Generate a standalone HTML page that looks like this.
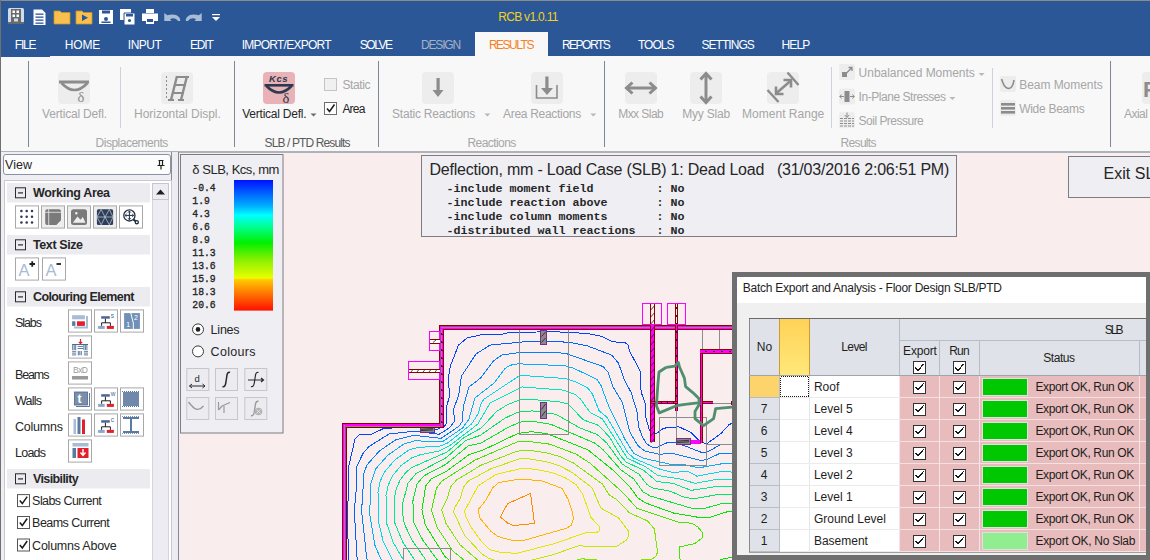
<!DOCTYPE html><html><head><meta charset="utf-8"><style>html,body{margin:0;padding:0;width:1150px;height:560px;overflow:hidden;background:#fff}svg{display:block}</style></head><body>
<svg width="1150" height="560" viewBox="0 0 1150 560" shape-rendering="crispEdges">
<rect x="0.00" y="0.00" width="1150.00" height="560.00" fill="#ffffff"/>
<rect x="179.00" y="152.00" width="971.00" height="408.00" fill="#f9eded"/>
<rect x="0.00" y="0.00" width="1150.00" height="57.00" fill="#2b5797"/>
<rect x="0.00" y="0.00" width="1150.00" height="1.00" fill="#8c8c8c"/>
<rect x="1.00" y="57.00" width="1149.00" height="94.00" fill="#f8f8f8"/>
<rect x="50.00" y="56.00" width="425.00" height="1.00" fill="#f8f8f8"/>
<rect x="548.00" y="56.00" width="602.00" height="1.00" fill="#f8f8f8"/>
<rect x="475.00" y="32.00" width="73.00" height="25.00" fill="#f8f8f8"/>
<rect x="1.00" y="151.00" width="1149.00" height="2.00" fill="#aeb2ba"/>
<rect x="0.00" y="0.00" width="1.00" height="560.00" fill="#707070"/>
<g shape-rendering="geometricPrecision">
<text x="498.2" y="21.0" font-size="12" fill="#f2d21c" font-weight="normal" font-family='"Liberation Sans", sans-serif' textLength="60.3" lengthAdjust="spacing">RCB v1.0.11</text>
<text x="14.8" y="49.0" font-size="12" fill="#ffffff" font-weight="normal" font-family='"Liberation Sans", sans-serif' textLength="21.7" lengthAdjust="spacing">FILE</text>
<text x="64.8" y="49.0" font-size="12" fill="#ffffff" font-weight="normal" font-family='"Liberation Sans", sans-serif' textLength="35.5" lengthAdjust="spacing">HOME</text>
<text x="127.8" y="49.0" font-size="12" fill="#ffffff" font-weight="normal" font-family='"Liberation Sans", sans-serif' textLength="34.1" lengthAdjust="spacing">INPUT</text>
<text x="189.9" y="49.0" font-size="12" fill="#ffffff" font-weight="normal" font-family='"Liberation Sans", sans-serif' textLength="23.9" lengthAdjust="spacing">EDIT</text>
<text x="241.7" y="49.0" font-size="12" fill="#ffffff" font-weight="normal" font-family='"Liberation Sans", sans-serif' textLength="89.8" lengthAdjust="spacing">IMPORT/EXPORT</text>
<text x="359.8" y="49.0" font-size="12" fill="#ffffff" font-weight="normal" font-family='"Liberation Sans", sans-serif' textLength="33.3" lengthAdjust="spacing">SOLVE</text>
<text x="421.1" y="49.0" font-size="12" fill="#a4b0c4" font-weight="normal" font-family='"Liberation Sans", sans-serif' textLength="40.0" lengthAdjust="spacing">DESIGN</text>
<text x="488.9" y="49.0" font-size="12" fill="#f5821f" font-weight="normal" font-family='"Liberation Sans", sans-serif' textLength="45.5" lengthAdjust="spacing">RESULTS</text>
<text x="561.9" y="49.0" font-size="12" fill="#ffffff" font-weight="normal" font-family='"Liberation Sans", sans-serif' textLength="48.9" lengthAdjust="spacing">REPORTS</text>
<text x="637.9" y="49.0" font-size="12" fill="#ffffff" font-weight="normal" font-family='"Liberation Sans", sans-serif' textLength="36.7" lengthAdjust="spacing">TOOLS</text>
<text x="701.5" y="49.0" font-size="12" fill="#ffffff" font-weight="normal" font-family='"Liberation Sans", sans-serif' textLength="53.3" lengthAdjust="spacing">SETTINGS</text>
<text x="781.6" y="49.0" font-size="12" fill="#ffffff" font-weight="normal" font-family='"Liberation Sans", sans-serif' textLength="28.6" lengthAdjust="spacing">HELP</text>
<rect x="8.00" y="8.00" width="16.00" height="16.00" fill="#cfdcec" rx="1.5"/>
<rect x="11.00" y="9.00" width="10.00" height="13.00" fill="#6a6a6a"/>
<rect x="12.50" y="10.50" width="2.50" height="2.50" fill="#ffffff"/>
<rect x="16.50" y="10.50" width="2.50" height="2.50" fill="#ffffff"/>
<rect x="12.50" y="14.50" width="2.50" height="2.50" fill="#ffffff"/>
<rect x="16.50" y="14.50" width="2.50" height="2.50" fill="#ffffff"/>
<rect x="14.00" y="18.50" width="4.00" height="3.00" fill="#cfdcec"/>
<rect x="8.00" y="22.00" width="16.00" height="2.00" fill="#6a6a6a"/>
<path d="M33.5 9.5 H42 L45.5 13 V25 H33.5 Z" fill="#ffffff"/>
<rect x="35.50" y="13.50" width="8.00" height="1.30" fill="#2b5797"/>
<rect x="35.50" y="16.50" width="8.00" height="1.30" fill="#2b5797"/>
<rect x="35.50" y="19.50" width="8.00" height="1.30" fill="#2b5797"/>
<rect x="35.50" y="22.50" width="8.00" height="1.30" fill="#2b5797"/>
<path d="M54 11 H60 L61.5 12.5 H70 V24 H54 Z" fill="#f9c04f" stroke="#c99220" stroke-width="0.8"/>
<path d="M76 11 H82 L83.5 12.5 H92 V24 H76 Z" fill="#f9c04f" stroke="#c99220" stroke-width="0.8"/>
<path d="M82 14.5 L88 17.8 L82 21 Z" fill="#2b5797"/>
<path d="M99 10 H113 V24 H99 Z" fill="#ffffff"/>
<rect x="102.00" y="10.50" width="8.00" height="3.00" fill="#2b5797"/>
<path d="M106 19 m-2 0 a2 2 0 1 0 4 0 a2 2 0 1 0 -4 0" fill="#2b5797"/>
<rect x="101.50" y="21.50" width="9.00" height="1.50" fill="#2b5797"/>
<path d="M120 9 H131 V20 H120 Z" fill="#ffffff"/>
<path d="M124 13 H135 V25 H124 Z" fill="#ffffff" stroke="#2b5797" stroke-width="1"/>
<rect x="126.00" y="14.00" width="7.00" height="2.50" fill="#2b5797"/>
<path d="M129.5 20.5 m-1.6 0 a1.6 1.6 0 1 0 3.2 0 a1.6 1.6 0 1 0 -3.2 0" fill="#2b5797"/>
<rect x="146.00" y="9.00" width="8.00" height="4.00" fill="#ffffff"/>
<path d="M142 13.5 H158 V21 H154 V24 H146 V21 H142 Z" fill="#ffffff"/>
<rect x="147.00" y="19.00" width="6.00" height="3.00" fill="#2b5797"/>
<path d="M164.3 13 L167.2 15.2 Q175.5 13.2 179 17 Q180.5 19 180.2 21 L178 21 Q176.5 18.3 173.5 18.3 Q171 18.3 170 19.6 L171.6 21 L164.3 21 Z" fill="#a9bcd6"/>
<path d="M201.7 13 L198.8 15.2 Q190.5 13.2 187 17 Q185.5 19 185.8 21 L188 21 Q189.5 18.3 192.5 18.3 Q195 18.3 196 19.6 L194.4 21 L201.7 21 Z" fill="#a9bcd6"/>
<rect x="212.00" y="14.00" width="8.00" height="1.20" fill="#ffffff"/>
<path d="M212 17 H220 L216 21 Z" fill="#ffffff"/>
</g>
<g>
<rect x="28.00" y="61.00" width="1.00" height="86.00" fill="#7f8795"/>
<rect x="234.00" y="61.00" width="1.00" height="86.00" fill="#7f8795"/>
<rect x="378.00" y="61.00" width="1.00" height="86.00" fill="#7f8795"/>
<rect x="604.00" y="61.00" width="1.00" height="86.00" fill="#7f8795"/>
<rect x="1110.00" y="61.00" width="1.00" height="86.00" fill="#7f8795"/>
<rect x="120.00" y="67.00" width="1.00" height="61.00" fill="#cdd3dc"/>
<rect x="831.00" y="67.00" width="1.00" height="61.00" fill="#cdd3dc"/>
<rect x="992.00" y="68.00" width="1.00" height="60.00" fill="#cdd3dc"/>
</g>
<g shape-rendering="geometricPrecision">
<rect x="58.00" y="72.00" width="32.00" height="32.00" fill="#ededed" rx="4"/>
<rect x="161.00" y="72.00" width="32.00" height="32.00" fill="#ededed" rx="4"/>
<rect x="422.00" y="72.00" width="32.00" height="32.00" fill="#ededed" rx="4"/>
<rect x="531.00" y="72.00" width="32.00" height="32.00" fill="#ededed" rx="4"/>
<rect x="625.00" y="72.00" width="32.00" height="32.00" fill="#ededed" rx="4"/>
<rect x="690.00" y="72.00" width="32.00" height="32.00" fill="#ededed" rx="4"/>
<rect x="767.00" y="72.00" width="32.00" height="32.00" fill="#ededed" rx="4"/>
<rect x="1142.00" y="72.00" width="32.00" height="32.00" fill="#ededed" rx="4"/>
<rect x="59.00" y="80.50" width="30.00" height="3.00" fill="#8c8c8c"/>
<path d="M61.5 83 Q74.5 97 87.5 83" fill="none" stroke="#8c8c8c" stroke-width="2.6"/>
<text x="77.5" y="101.8" font-size="14.5" fill="#8c8c8c" font-weight="normal" font-family='"Liberation Serif", serif'>δ</text>
<path d="M171 100 L177 76 M181 100 L187 76" fill="none" stroke="#8c8c8c" stroke-width="2.4"/>
<path d="M176 77 H189 M174.5 85 H186 M172.5 93 H184 M168 100 H174 M178 100 H184" fill="none" stroke="#8c8c8c" stroke-width="2"/>
<path d="M166.5 76 V100" fill="none" stroke="#8c8c8c" stroke-width="1" stroke-dasharray="2 2"/>
<rect x="263.00" y="72.00" width="32.00" height="32.00" fill="#e8b2b6" rx="4"/>
<text x="269.0" y="81.5" font-size="9.5" fill="#2b3a4e" font-weight="bold" font-family='"Liberation Sans", sans-serif' textLength="18.5" lengthAdjust="spacing" font-style="italic">Kcs</text>
<rect x="264.50" y="84.00" width="29.00" height="2.60" fill="#2b3a4e"/>
<path d="M266.5 86 Q279 99 291.5 86" fill="none" stroke="#2b3a4e" stroke-width="2.6"/>
<text x="282.5" y="102.8" font-size="14.5" fill="#2b3a4e" font-weight="normal" font-family='"Liberation Serif", serif'>δ</text>
<rect x="436.50" y="78.00" width="3.20" height="13.00" fill="#8c8c8c"/>
<path d="M432.5 90 H443.5 L438 97 Z" fill="#8c8c8c"/>
<path d="M536.5 85 V98 H557 V85" fill="none" stroke="#8c8c8c" stroke-width="1.6"/>
<rect x="545.30" y="76.50" width="3.20" height="12.00" fill="#8c8c8c"/>
<path d="M541 88 H553 L547 95 Z" fill="#8c8c8c"/>
<path d="M628 88 H654" fill="none" stroke="#8c8c8c" stroke-width="3"/>
<path d="M632.5 82.5 L626.5 88 L632.5 93.5 M649.5 82.5 L655.5 88 L649.5 93.5" fill="none" stroke="#8c8c8c" stroke-width="3"/>
<path d="M706 75 V101" fill="none" stroke="#8c8c8c" stroke-width="3"/>
<path d="M700.5 79.5 L706 73.5 L711.5 79.5 M700.5 96.5 L706 102.5 L711.5 96.5" fill="none" stroke="#8c8c8c" stroke-width="3"/>
<path d="M776 93.5 L791 80.5" fill="none" stroke="#8c8c8c" stroke-width="2.6"/>
<path d="M776 86.5 V94 H783.5 M783.5 80 H791 V87.5" fill="none" stroke="#8c8c8c" stroke-width="2.6"/>
<path d="M767.5 90 L778.5 102 M787.5 72.5 L798.5 85" fill="none" stroke="#8c8c8c" stroke-width="2.4"/>
<text x="1143.0" y="97.0" font-size="22" fill="#8c8c8c" font-weight="bold" font-family='"Liberation Sans", sans-serif'>P</text>
<text x="42.1" y="118.0" font-size="12" fill="#a6a6a6" font-weight="normal" font-family='"Liberation Sans", sans-serif' textLength="64.9" lengthAdjust="spacing">Vertical Defl.</text>
<text x="134.1" y="118.0" font-size="12" fill="#a6a6a6" font-weight="normal" font-family='"Liberation Sans", sans-serif' textLength="86.7" lengthAdjust="spacing">Horizontal Displ.</text>
<text x="242.2" y="118.0" font-size="12" fill="#262626" font-weight="normal" font-family='"Liberation Sans", sans-serif' textLength="64.4" lengthAdjust="spacing">Vertical Defl.</text>
<text x="392.1" y="118.0" font-size="12" fill="#a6a6a6" font-weight="normal" font-family='"Liberation Sans", sans-serif' textLength="83.2" lengthAdjust="spacing">Static Reactions</text>
<text x="503.0" y="118.0" font-size="12" fill="#a6a6a6" font-weight="normal" font-family='"Liberation Sans", sans-serif' textLength="78.2" lengthAdjust="spacing">Area Reactions</text>
<text x="618.2" y="118.0" font-size="12" fill="#a6a6a6" font-weight="normal" font-family='"Liberation Sans", sans-serif' textLength="45.6" lengthAdjust="spacing">Mxx Slab</text>
<text x="682.3" y="118.0" font-size="12" fill="#a6a6a6" font-weight="normal" font-family='"Liberation Sans", sans-serif' textLength="47.8" lengthAdjust="spacing">Myy Slab</text>
<text x="742.1" y="118.0" font-size="12" fill="#a6a6a6" font-weight="normal" font-family='"Liberation Sans", sans-serif' textLength="82.2" lengthAdjust="spacing">Moment Range</text>
<text x="1124.1" y="118.0" font-size="12" fill="#a6a6a6" font-weight="normal" font-family='"Liberation Sans", sans-serif' textLength="23.7" lengthAdjust="spacing">Axial</text>
<path d="M310.5 113.5 H316.5 L313.5 116.5 Z" fill="#6a6a6a"/>
<path d="M484.4 113.5 H490.4 L487.4 116.5 Z" fill="#b8b8b8"/>
<path d="M590.3 113.5 H596.3 L593.3 116.5 Z" fill="#b8b8b8"/>
<path d="M978.6 73 H984.6 L981.6 76 Z" fill="#b8b8b8"/>
<path d="M949.4 97 H955.4 L952.4 100 Z" fill="#b8b8b8"/>
<text x="95.6" y="147.0" font-size="12" fill="#a6a6a6" font-weight="normal" font-family='"Liberation Sans", sans-serif' textLength="72.7" lengthAdjust="spacing">Displacements</text>
<text x="264.5" y="147.0" font-size="12" fill="#5a5a5a" font-weight="normal" font-family='"Liberation Sans", sans-serif' textLength="86.0" lengthAdjust="spacing">SLB / PTD Results</text>
<text x="467.4" y="147.0" font-size="12" fill="#a6a6a6" font-weight="normal" font-family='"Liberation Sans", sans-serif' textLength="48.9" lengthAdjust="spacing">Reactions</text>
<text x="840.6" y="147.0" font-size="12" fill="#a6a6a6" font-weight="normal" font-family='"Liberation Sans", sans-serif' textLength="35.9" lengthAdjust="spacing">Results</text>
<rect x="324.50" y="78.50" width="12.00" height="12.00" fill="#f0f0f0" stroke="#c4c4c4" stroke-width="1"/>
<text x="342.4" y="89.0" font-size="12" fill="#a6a6a6" font-weight="normal" font-family='"Liberation Sans", sans-serif' textLength="28.2" lengthAdjust="spacing">Static</text>
<rect x="324.50" y="102.50" width="12.00" height="12.00" fill="#ffffff" stroke="#6e6e6e" stroke-width="1"/>
<path d="M327 108.5 L329.5 111.5 L334.5 104.5" fill="none" stroke="#1a1a1a" stroke-width="1.5"/>
<text x="342.4" y="113.0" font-size="12" fill="#262626" font-weight="normal" font-family='"Liberation Sans", sans-serif' textLength="23.0" lengthAdjust="spacing">Area</text>
<rect x="839.00" y="64.00" width="16.00" height="16.00" fill="#ededed" rx="2"/>
<rect x="839.00" y="88.60" width="16.00" height="16.00" fill="#ededed" rx="2"/>
<rect x="839.00" y="112.30" width="16.00" height="16.00" fill="#ededed" rx="2"/>
<rect x="842.00" y="72.00" width="5.00" height="5.00" fill="#8c8c8c"/>
<path d="M845.5 74 L852 67.5 M848.5 67.5 H852 V71" fill="none" stroke="#8c8c8c" stroke-width="1.3"/>
<rect x="844.50" y="91.00" width="5.00" height="11.00" fill="#8c8c8c"/>
<path d="M839.8 96.5 H844 M850 96.5 H854.2 M841.5 94.5 L839.8 96.5 L841.5 98.5 M852.5 94.5 L854.2 96.5 L852.5 98.5" fill="none" stroke="#8c8c8c" stroke-width="1"/>
<path d="M847 112.5 V117 M844.8 115 L847 117.5 L849.2 115" fill="none" stroke="#8c8c8c" stroke-width="1"/>
<path d="M840 118.5 H854" fill="none" stroke="#8c8c8c" stroke-width="1" stroke-dasharray="3 1"/>
<path d="M840 121 H854" fill="none" stroke="#8c8c8c" stroke-width="1" stroke-dasharray="3 1"/>
<path d="M840 123.5 H854" fill="none" stroke="#8c8c8c" stroke-width="1" stroke-dasharray="3 1"/>
<path d="M840 126 H854" fill="none" stroke="#8c8c8c" stroke-width="1" stroke-dasharray="3 1"/>
<text x="858.6" y="76.7" font-size="12" fill="#a6a6a6" font-weight="normal" font-family='"Liberation Sans", sans-serif' textLength="116.2" lengthAdjust="spacing">Unbalanced Moments</text>
<text x="858.6" y="100.6" font-size="12" fill="#a6a6a6" font-weight="normal" font-family='"Liberation Sans", sans-serif' textLength="87.3" lengthAdjust="spacing">In-Plane Stresses</text>
<text x="858.6" y="124.7" font-size="12" fill="#a6a6a6" font-weight="normal" font-family='"Liberation Sans", sans-serif' textLength="65.2" lengthAdjust="spacing">Soil Pressure</text>
<rect x="1000.00" y="76.00" width="16.00" height="16.00" fill="#ededed" rx="2"/>
<path d="M1001.5 79 L1003 83 Q1005 88 1008.5 88.5 Q1013 88 1014 80" fill="none" stroke="#8c8c8c" stroke-width="1.6"/>
<rect x="1000.00" y="100.00" width="16.00" height="16.00" fill="#ededed" rx="2"/>
<rect x="1001.00" y="103.00" width="14.00" height="2.60" fill="#8c8c8c"/>
<rect x="1001.00" y="107.00" width="14.00" height="2.60" fill="#8c8c8c"/>
<rect x="1001.00" y="111.00" width="14.00" height="2.60" fill="#8c8c8c"/>
<text x="1019.2" y="89.0" font-size="12" fill="#a6a6a6" font-weight="normal" font-family='"Liberation Sans", sans-serif' textLength="83.5" lengthAdjust="spacing">Beam Moments</text>
<text x="1019.2" y="113.0" font-size="12" fill="#a6a6a6" font-weight="normal" font-family='"Liberation Sans", sans-serif' textLength="65.5" lengthAdjust="spacing">Wide Beams</text>
</g>
<rect x="1.00" y="152.00" width="170.00" height="408.00" fill="#eeeef3"/>
<rect x="5.00" y="181.00" width="166.00" height="379.00" fill="#ffffff"/>
<rect x="171.00" y="152.00" width="1.00" height="408.00" fill="#8c8c8c"/>
<rect x="172.00" y="152.00" width="6.50" height="408.00" fill="#ececf2"/>
<rect x="178.00" y="152.00" width="1.00" height="408.00" fill="#838896"/>
<g shape-rendering="geometricPrecision">
<rect x="3.50" y="154.50" width="167.00" height="20.00" fill="#fcfcfc" stroke="#8a93a6" stroke-width="1" rx="2.5"/>
<text x="5.0" y="169.0" font-size="12.5" fill="#262626" font-weight="normal" font-family='"Liberation Sans", sans-serif' textLength="27.0" lengthAdjust="spacing">View</text>
<path d="M158.5 160.5 H163.5 M159.5 160.5 V165.5 H162.5 V160.5 M157.5 165.5 H164.5 M161 165.5 V169.5" fill="none" stroke="#1e1e1e" stroke-width="1.2"/>
<rect x="4.50" y="180.50" width="167.00" height="390.00" fill="none" stroke="#c8c8d2" stroke-width="1"/>
<rect x="152.50" y="183.50" width="16.00" height="380.00" fill="#ececf2" stroke="#d4d4de" stroke-width="1"/>
<rect x="152.50" y="183.50" width="16.00" height="16.00" fill="#ececf2" stroke="#c6c6d2" stroke-width="1"/>
<path d="M156 194.5 H165 L160.5 189.5 Z" fill="#1e1e1e"/>
<rect x="7.00" y="183.00" width="143.00" height="19.50" fill="#ebebf0"/>
<rect x="15.50" y="187.80" width="10.00" height="10.00" fill="none" stroke="#2a2a2a" stroke-width="1"/>
<rect x="18.00" y="192.30" width="5.00" height="1.20" fill="#2a2a2a"/>
<text x="33.0" y="197.2" font-size="12.5" fill="#262626" font-weight="bold" font-family='"Liberation Sans", sans-serif' textLength="77.0" lengthAdjust="spacing">Working Area</text>
<rect x="7.00" y="235.00" width="143.00" height="19.50" fill="#ebebf0"/>
<rect x="15.50" y="239.80" width="10.00" height="10.00" fill="none" stroke="#2a2a2a" stroke-width="1"/>
<rect x="18.00" y="244.30" width="5.00" height="1.20" fill="#2a2a2a"/>
<text x="33.0" y="249.2" font-size="12.5" fill="#262626" font-weight="bold" font-family='"Liberation Sans", sans-serif' textLength="50.0" lengthAdjust="spacing">Text Size</text>
<rect x="7.00" y="287.00" width="143.00" height="19.50" fill="#ebebf0"/>
<rect x="15.50" y="291.80" width="10.00" height="10.00" fill="none" stroke="#2a2a2a" stroke-width="1"/>
<rect x="18.00" y="296.30" width="5.00" height="1.20" fill="#2a2a2a"/>
<text x="33.0" y="301.2" font-size="12.5" fill="#262626" font-weight="bold" font-family='"Liberation Sans", sans-serif' textLength="101.4" lengthAdjust="spacing">Colouring Element</text>
<rect x="7.00" y="469.00" width="143.00" height="19.50" fill="#ebebf0"/>
<rect x="15.50" y="473.80" width="10.00" height="10.00" fill="none" stroke="#2a2a2a" stroke-width="1"/>
<rect x="18.00" y="478.30" width="5.00" height="1.20" fill="#2a2a2a"/>
<text x="33.0" y="483.2" font-size="12.5" fill="#262626" font-weight="bold" font-family='"Liberation Sans", sans-serif' textLength="45.7" lengthAdjust="spacing">Visibility</text>
<rect x="15.50" y="205.90" width="23.00" height="22.20" fill="#ffffff" stroke="#a8a8a8" stroke-width="1"/>
<rect x="41.50" y="205.90" width="23.00" height="22.20" fill="#eeeeee" stroke="#a8a8a8" stroke-width="1"/>
<rect x="67.50" y="205.90" width="23.00" height="22.20" fill="#eeeeee" stroke="#a8a8a8" stroke-width="1"/>
<rect x="93.50" y="205.90" width="23.00" height="22.20" fill="#eeeeee" stroke="#a8a8a8" stroke-width="1"/>
<rect x="119.50" y="205.90" width="23.00" height="22.20" fill="#ffffff" stroke="#a8a8a8" stroke-width="1"/>
<path d="M21.4 211.0 h0.01" fill="none" stroke="#2b3a55" stroke-width="2.5" stroke-linecap="round"/>
<path d="M26.7 211.0 h0.01" fill="none" stroke="#2b3a55" stroke-width="2.5" stroke-linecap="round"/>
<path d="M32.0 211.0 h0.01" fill="none" stroke="#2b3a55" stroke-width="2.5" stroke-linecap="round"/>
<path d="M21.4 216.75 h0.01" fill="none" stroke="#2b3a55" stroke-width="2.5" stroke-linecap="round"/>
<path d="M26.7 216.75 h0.01" fill="none" stroke="#2b3a55" stroke-width="2.5" stroke-linecap="round"/>
<path d="M32.0 216.75 h0.01" fill="none" stroke="#2b3a55" stroke-width="2.5" stroke-linecap="round"/>
<path d="M21.4 222.5 h0.01" fill="none" stroke="#2b3a55" stroke-width="2.5" stroke-linecap="round"/>
<path d="M26.7 222.5 h0.01" fill="none" stroke="#2b3a55" stroke-width="2.5" stroke-linecap="round"/>
<path d="M32.0 222.5 h0.01" fill="none" stroke="#2b3a55" stroke-width="2.5" stroke-linecap="round"/>
<rect x="45.20" y="209.20" width="15.80" height="15.80" fill="#7a7a7a" rx="2"/>
<path d="M48.7 209 V225 M45 212.3 H61" fill="none" stroke="#eeeeee" stroke-width="0.8"/>
<path d="M56 225.2 L61.2 220 V225.2 Z" fill="#eeeeee"/>
<path d="M56.5 224.5 Q56.5 220.5 60.5 220.5" fill="none" stroke="#7a7a7a" stroke-width="0.9"/>
<rect x="71.00" y="209.20" width="16.00" height="15.80" fill="#7a7a7a" rx="2.5"/>
<path d="M72.8 222.8 L77.5 216.5 L80.5 219.8 L82.8 217 L85.5 222.8 Z" fill="#eeeeee"/>
<path d="M76.3 213.2 m-1.3 0 a1.3 1.3 0 1 0 2.6 0 a1.3 1.3 0 1 0 -2.6 0" fill="#eeeeee"/>
<rect x="96.90" y="209.20" width="16.20" height="15.80" fill="#2e3e58" rx="1.5"/>
<path d="M96.9 217 L101.2 209.5 L105 217 L109.3 209.5 L113.1 217 M96.9 217 L101.2 224.8 L105 217 L109.3 224.8 L113.1 217 M96.9 217 H113.1" fill="none" stroke="#c9d2e0" stroke-width="0.7"/>
<path d="M129.4 215.4 m-5.6 0 a5.6 5.6 0 1 0 11.2 0 a5.6 5.6 0 1 0 -11.2 0" fill="none" stroke="#1e2d44" stroke-width="1.3"/>
<path d="M129.4 211.3 V219.5 M125.3 215.4 H133.5" fill="none" stroke="#1e2d44" stroke-width="1"/>
<path d="M128 212.6 L129.4 211 L130.8 212.6 M128 218.2 L129.4 219.8 L130.8 218.2 M126.6 214 L125 215.4 L126.6 216.8 M132.2 214 L133.8 215.4 L132.2 216.8" fill="none" stroke="#1e2d44" stroke-width="0.9"/>
<path d="M133.5 219.5 L136.5 222" fill="none" stroke="#1e2d44" stroke-width="2.2"/>
<path d="M136.8 222.2 m-2.2 0 a2.2 2.2 0 1 0 4.4 0 a2.2 2.2 0 1 0 -4.4 0" fill="#1e2d44"/>
<path d="M136.8 222.2 m-0.9 0 a0.9 0.9 0 1 0 1.8 0 a0.9 0.9 0 1 0 -1.8 0" fill="#ffffff"/>
<rect x="15.50" y="257.90" width="23.00" height="22.20" fill="#ffffff" stroke="#a8a8a8" stroke-width="1"/>
<rect x="42.50" y="257.90" width="23.00" height="22.20" fill="#ffffff" stroke="#a8a8a8" stroke-width="1"/>
<text x="18.5" y="276.0" font-size="16.5" fill="#a7bcd4" font-weight="normal" font-family='"Liberation Sans", sans-serif'>A</text>
<path d="M29.5 264 H35 M32.25 261.3 V266.7" fill="none" stroke="#1e1e1e" stroke-width="1.8"/>
<text x="45.5" y="276.0" font-size="16.5" fill="#a7bcd4" font-weight="normal" font-family='"Liberation Sans", sans-serif'>A</text>
<path d="M56.5 264 H61" fill="none" stroke="#1e1e1e" stroke-width="1.8"/>
<text x="15.0" y="326.5" font-size="12.5" fill="#262626" font-weight="normal" font-family='"Liberation Sans", sans-serif' textLength="27.0" lengthAdjust="spacing">Slabs</text>
<text x="15.0" y="378.5" font-size="12.5" fill="#262626" font-weight="normal" font-family='"Liberation Sans", sans-serif' textLength="34.4" lengthAdjust="spacing">Beams</text>
<text x="15.0" y="404.5" font-size="12.5" fill="#262626" font-weight="normal" font-family='"Liberation Sans", sans-serif' textLength="27.0" lengthAdjust="spacing">Walls</text>
<text x="15.0" y="430.5" font-size="12.5" fill="#262626" font-weight="normal" font-family='"Liberation Sans", sans-serif' textLength="48.0" lengthAdjust="spacing">Columns</text>
<text x="15.0" y="456.5" font-size="12.5" fill="#262626" font-weight="normal" font-family='"Liberation Sans", sans-serif' textLength="31.0" lengthAdjust="spacing">Loads</text>
<rect x="68.50" y="309.90" width="23.00" height="22.20" fill="#ffffff" stroke="#a8a8a8" stroke-width="1"/>
<rect x="94.50" y="309.90" width="23.00" height="22.20" fill="#ffffff" stroke="#a8a8a8" stroke-width="1"/>
<rect x="120.50" y="309.90" width="23.00" height="22.20" fill="#ffffff" stroke="#a8a8a8" stroke-width="1"/>
<rect x="68.50" y="335.90" width="23.00" height="22.20" fill="#ffffff" stroke="#a8a8a8" stroke-width="1"/>
<rect x="68.50" y="361.90" width="23.00" height="22.20" fill="#ffffff" stroke="#a8a8a8" stroke-width="1"/>
<rect x="68.50" y="387.90" width="23.00" height="22.20" fill="#ffffff" stroke="#a8a8a8" stroke-width="1"/>
<rect x="94.50" y="387.90" width="23.00" height="22.20" fill="#ffffff" stroke="#a8a8a8" stroke-width="1"/>
<rect x="120.50" y="387.90" width="23.00" height="22.20" fill="#ffffff" stroke="#a8a8a8" stroke-width="1"/>
<rect x="68.50" y="413.90" width="23.00" height="22.20" fill="#ffffff" stroke="#a8a8a8" stroke-width="1"/>
<rect x="94.50" y="413.90" width="23.00" height="22.20" fill="#ffffff" stroke="#a8a8a8" stroke-width="1"/>
<rect x="120.50" y="413.90" width="23.00" height="22.20" fill="#ffffff" stroke="#a8a8a8" stroke-width="1"/>
<rect x="68.50" y="439.90" width="23.00" height="22.20" fill="#ffffff" stroke="#a8a8a8" stroke-width="1"/>
<path d="M74 327.5 H87 V316" fill="none" stroke="#a8bcd6" stroke-width="2"/>
<rect x="72.10" y="315.20" width="12.80" height="4.10" fill="#a8bcd6"/>
<rect x="72.10" y="321.30" width="3.30" height="4.60" fill="#5a7aa4"/>
<rect x="77.00" y="321.30" width="7.90" height="4.60" fill="#e0202a"/>
<rect x="101.20" y="316.20" width="8.60" height="2.50" fill="#4a6a94"/>
<path d="M105.4 318.7 V322.79999999999995 M101.6 322.79999999999995 H110.4 M101.6 322.79999999999995 V325.9 M110.4 322.79999999999995 V325.9" fill="none" stroke="#1e1e1e" stroke-width="1"/>
<rect x="98.10" y="325.90" width="6.60" height="3.00" fill="#8aa8cc"/>
<rect x="106.80" y="325.90" width="7.10" height="3.00" fill="#e0202a"/>
<text x="110.8" y="317.7" font-size="6.5" fill="#4a6a94" font-weight="normal" font-family='"Liberation Sans", sans-serif'>s</text>
<rect x="101.20" y="394.20" width="8.60" height="2.50" fill="#4a6a94"/>
<path d="M105.4 396.7 V400.79999999999995 M101.6 400.79999999999995 H110.4 M101.6 400.79999999999995 V403.9 M110.4 400.79999999999995 V403.9" fill="none" stroke="#1e1e1e" stroke-width="1"/>
<rect x="98.10" y="403.90" width="6.60" height="3.00" fill="#8aa8cc"/>
<rect x="106.80" y="403.90" width="7.10" height="3.00" fill="#e0202a"/>
<text x="110.8" y="395.7" font-size="6.5" fill="#4a6a94" font-weight="normal" font-family='"Liberation Sans", sans-serif'>w</text>
<rect x="101.20" y="420.20" width="8.60" height="2.50" fill="#4a6a94"/>
<path d="M105.4 422.7 V426.79999999999995 M101.6 426.79999999999995 H110.4 M101.6 426.79999999999995 V429.9 M110.4 426.79999999999995 V429.9" fill="none" stroke="#1e1e1e" stroke-width="1"/>
<rect x="98.10" y="429.90" width="6.60" height="3.00" fill="#8aa8cc"/>
<rect x="106.80" y="429.90" width="7.10" height="3.00" fill="#e0202a"/>
<text x="110.8" y="421.7" font-size="6.5" fill="#4a6a94" font-weight="normal" font-family='"Liberation Sans", sans-serif'>c</text>
<rect x="124.10" y="313.10" width="15.80" height="15.80" fill="#7090b8"/>
<path d="M130.8 313 L133.3 323 V329" fill="none" stroke="#ffffff" stroke-width="1"/>
<text x="126.2" y="327.0" font-size="7" fill="#ffffff" font-weight="normal" font-family='"Liberation Sans", sans-serif'>1</text>
<text x="134.0" y="319.8" font-size="7" fill="#ffffff" font-weight="normal" font-family='"Liberation Sans", sans-serif'>2</text>
<path d="M80.5 339 V343.5 M78.8 341.8 L80.5 343.7 L82.2 341.8" fill="none" stroke="#e0202a" stroke-width="1.1"/>
<path d="M72.1 344.5 H88" fill="none" stroke="#4a6a94" stroke-width="1"/>
<path d="M72.7 345 V350 M74.2 345 V350 M75.7 345 V350 M83.9 345 V350 M85.4 345 V350 M86.9 345 V350" fill="none" stroke="#4a6a94" stroke-width="0.9"/>
<path d="M77.7 346.4 H83.3 M77.7 348.5 H83.3" fill="none" stroke="#4a6a94" stroke-width="0.9"/>
<path d="M72.1 351.3 H76.2 M72.1 353.1 H76.2 M72.1 354.9 H76.2 M83.9 351.3 H88 M83.9 353.1 H88 M83.9 354.9 H88" fill="none" stroke="#4a6a94" stroke-width="0.9"/>
<path d="M78.3 351 V355.3 M79.8 351 V355.3 M81.3 351 V355.3" fill="none" stroke="#4a6a94" stroke-width="0.9"/>
<text x="73.0" y="373.0" font-size="8.5" fill="#9a9a9a" font-weight="normal" font-family='"Liberation Sans", sans-serif' textLength="15.0" lengthAdjust="spacing">BxD</text>
<rect x="72.00" y="376.00" width="16.00" height="3.50" fill="#9a9a9a"/>
<rect x="74.50" y="392.00" width="13.00" height="13.00" fill="#7c8faa" stroke="#50648a" stroke-width="0.8"/>
<path d="M76 406.5 H89.5 V393" fill="none" stroke="#5a7aa4" stroke-width="1"/>
<text x="77.5" y="403.0" font-size="12" fill="#ffffff" font-weight="bold" font-family='"Liberation Sans", sans-serif'>t</text>
<rect x="123.00" y="392.00" width="16.00" height="14.00" fill="#7088aa"/>
<path d="M122 391.5 H140 M122 406.5 H140" fill="none" stroke="#5a7aa4" stroke-width="1" stroke-dasharray="1 1"/>
<rect x="73.50" y="419.00" width="2.50" height="15.00" fill="#a8bcd6"/>
<rect x="77.50" y="417.00" width="3.00" height="17.00" fill="#5a7aa4"/>
<rect x="82.00" y="419.50" width="3.00" height="14.50" fill="#e0202a"/>
<path d="M123 418 H139 M131 418 V432 M123 432 H139" fill="none" stroke="#5a7aa4" stroke-width="2"/>
<path d="M122 416.5 H140 M122 433.5 H140" fill="none" stroke="#5a7aa4" stroke-width="0.8" stroke-dasharray="1 1"/>
<rect x="72.50" y="443.00" width="16.00" height="3.50" fill="#a8bcd6"/>
<rect x="72.50" y="448.00" width="3.50" height="10.00" fill="#5a7aa4"/>
<rect x="77.50" y="448.00" width="11.00" height="10.00" fill="#e0202a"/>
<path d="M83 449 V455 M80.5 452.5 L83 455.5 L85.5 452.5" fill="none" stroke="#ffffff" stroke-width="1.4"/>
<rect x="17.50" y="494.60" width="12.00" height="12.00" fill="#ffffff" stroke="#555555" stroke-width="1"/>
<path d="M19.8 500.6 L22.3 503.6 L27.2 496.6" fill="none" stroke="#1a1a1a" stroke-width="1.5"/>
<text x="32.1" y="505.1" font-size="12.5" fill="#262626" font-weight="normal" font-family='"Liberation Sans", sans-serif' textLength="69.7" lengthAdjust="spacing">Slabs Current</text>
<rect x="17.50" y="516.50" width="12.00" height="12.00" fill="#ffffff" stroke="#555555" stroke-width="1"/>
<path d="M19.8 522.5 L22.3 525.5 L27.2 518.5" fill="none" stroke="#1a1a1a" stroke-width="1.5"/>
<text x="32.1" y="527.0" font-size="12.5" fill="#262626" font-weight="normal" font-family='"Liberation Sans", sans-serif' textLength="77.6" lengthAdjust="spacing">Beams Current</text>
<rect x="17.50" y="539.00" width="12.00" height="12.00" fill="#ffffff" stroke="#555555" stroke-width="1"/>
<path d="M19.8 545 L22.3 548 L27.2 541" fill="none" stroke="#1a1a1a" stroke-width="1.5"/>
<text x="32.1" y="549.5" font-size="12.5" fill="#262626" font-weight="normal" font-family='"Liberation Sans", sans-serif' textLength="84.7" lengthAdjust="spacing">Columns Above</text>
</g>
<defs><clipPath id="slab"><path d="M346.3 560 V426.6 H443.6 V330 H732 V560 Z"/></clipPath></defs>
<g clip-path="url(#slab)" shape-rendering="crispEdges">
<path d="M350.1 570.0 L348.5 560.0 L347.6 520.0 L348.8 466.0 L355.0 439.0 L359.1 435.0 L372.0 434.0 L384.0 428.3 L414.0 427.2 L437.0 429.3 L444.7 426.0 L447.0 422.0 L446.9 405.0 L449.8 396.0 L448.2 379.0 L450.4 366.0 L458.5 345.0 L467.1 338.0 L482.0 334.6 L502.0 334.2 L509.0 332.5 L554.0 331.7 L587.0 333.4 L602.0 336.4 L613.0 341.8 L625.0 342.6 L628.0 345.0 L630.0 352.0 L640.2 371.0 L641.1 392.0 L645.8 405.0 L646.0 418.1 L649.0 429.0 L652.0 433.1 L656.0 433.8 L662.0 429.2 L667.0 427.5 L679.0 426.9 L691.0 432.4 L701.0 442.3 L707.0 443.7 L721.5 433.0 L729.0 424.7 L740.0 419.5" fill="none" stroke="#0040ff" stroke-width="1"/>
<path d="M359.7 570.0 L357.0 557.0 L354.3 511.0 L356.7 485.0 L356.0 468.0 L363.0 453.5 L369.0 446.5 L389.0 434.0 L414.0 431.2 L439.0 434.3 L449.3 428.0 L454.8 421.0 L453.3 410.0 L458.7 395.0 L461.5 376.0 L476.1 354.0 L490.0 345.1 L527.0 341.5 L552.0 341.1 L571.0 342.6 L587.0 345.7 L612.0 355.3 L618.4 363.0 L624.4 380.0 L631.0 392.2 L636.9 411.0 L638.7 427.0 L642.4 437.0 L646.7 444.0 L651.9 447.0 L657.0 447.3 L667.0 442.8 L675.0 442.1 L703.0 453.0 L709.0 451.2 L721.0 444.2 L732.0 444.4 L740.0 442.5" fill="none" stroke="#0060ff" stroke-width="1"/>
<path d="M371.8 570.0 L366.7 558.0 L361.6 511.0 L364.0 473.0 L366.9 465.0 L379.3 451.0 L395.5 440.0 L414.0 435.3 L441.0 438.4 L459.3 426.0 L462.5 421.0 L463.2 407.0 L469.0 387.0 L480.6 378.0 L493.3 361.0 L502.0 355.0 L522.0 352.2 L565.0 353.1 L603.0 366.5 L607.9 372.0 L613.0 387.0 L622.2 402.0 L629.8 432.0 L638.0 445.7 L644.6 451.0 L659.0 454.2 L673.0 453.5 L701.0 460.4 L707.0 459.5 L720.7 453.0 L740.0 454.3" fill="none" stroke="#0080ff" stroke-width="1"/>
<path d="M385.6 570.0 L374.8 545.0 L369.7 514.0 L370.8 484.0 L375.6 469.0 L388.0 455.1 L404.0 444.0 L415.0 440.7 L442.0 442.0 L462.6 428.0 L469.0 419.0 L474.9 398.0 L494.2 383.0 L505.0 368.5 L510.0 365.3 L518.0 363.8 L565.0 365.7 L574.0 368.4 L597.0 379.4 L600.8 385.0 L609.0 407.0 L625.0 439.4 L634.0 453.7 L643.0 458.1 L673.0 464.9 L685.0 464.9 L699.0 467.8 L724.0 463.4 L740.0 463.6" fill="none" stroke="#00b0ff" stroke-width="1"/>
<path d="M397.2 570.0 L383.1 541.0 L378.5 522.0 L378.0 492.0 L380.3 481.0 L384.5 472.0 L395.0 459.8 L409.0 449.9 L419.0 447.2 L439.0 446.6 L448.0 442.8 L471.6 424.0 L478.0 414.0 L481.3 403.0 L484.0 399.1 L520.0 375.3 L565.0 378.5 L575.0 381.6 L587.7 388.0 L592.4 394.0 L599.2 411.0 L607.0 417.3 L627.9 453.0 L634.0 458.3 L658.0 468.6 L672.0 472.3 L688.0 471.6 L697.0 476.2 L721.0 471.6 L740.0 472.4" fill="none" stroke="#00d8f0" stroke-width="1"/>
<path d="M409.2 570.0 L393.0 542.0 L386.5 523.0 L386.0 495.2 L388.3 485.0 L392.4 476.0 L401.0 465.6 L411.6 458.0 L420.0 454.8 L439.0 451.1 L449.0 446.2 L477.9 424.0 L490.0 403.1 L522.0 386.9 L563.0 390.1 L575.0 394.3 L580.4 399.0 L590.0 412.3 L602.5 419.0 L627.2 458.0 L646.0 467.1 L658.0 475.6 L680.0 478.9 L695.0 483.3 L719.0 479.0 L740.0 480.3" fill="none" stroke="#00e8c0" stroke-width="1"/>
<path d="M421.5 570.0 L403.0 542.5 L394.4 522.0 L394.1 499.0 L396.2 489.0 L400.1 480.0 L405.3 473.0 L412.0 467.4 L447.0 452.0 L464.0 437.6 L481.2 428.0 L497.0 411.1 L508.0 404.4 L520.0 399.8 L528.0 399.1 L560.0 401.9 L568.0 404.1 L583.6 420.0 L597.0 424.7 L601.0 427.7 L610.0 437.8 L620.0 455.0 L626.0 462.0 L643.2 470.0 L657.0 481.6 L673.0 483.3 L691.0 490.4 L719.0 486.1 L740.0 487.5" fill="none" stroke="#00e890" stroke-width="1"/>
<path d="M432.9 570.0 L411.9 540.0 L404.4 524.0 L402.7 514.0 L403.0 502.0 L408.1 483.0 L416.0 473.7 L446.0 457.8 L466.0 440.3 L480.0 435.5 L505.0 418.1 L518.0 412.2 L532.0 410.9 L556.0 414.3 L580.1 428.0 L597.0 434.5 L606.8 443.0 L622.0 464.0 L639.0 474.2 L647.0 484.6 L653.0 488.2 L670.0 491.1 L683.0 496.7 L693.0 498.9 L721.0 494.0 L740.0 495.2" fill="none" stroke="#00e860" stroke-width="1"/>
<path d="M444.9 570.0 L423.3 541.0 L413.9 523.0 L412.9 501.0 L416.9 484.0 L423.7 476.0 L446.0 464.2 L468.0 446.0 L481.0 443.1 L509.0 426.9 L521.0 421.9 L535.0 421.6 L551.0 424.4 L595.0 443.2 L603.0 449.6 L621.0 470.0 L633.8 479.0 L643.0 491.9 L650.0 495.9 L693.0 508.7 L705.0 508.3 L723.0 503.2 L740.0 503.9" fill="none" stroke="#00e830" stroke-width="1"/>
<path d="M460.1 570.0 L444.5 556.0 L425.3 525.0 L421.9 510.0 L425.7 486.0 L431.2 479.0 L447.0 470.9 L469.0 454.7 L483.0 450.1 L518.0 433.4 L532.0 431.7 L547.0 433.6 L588.0 449.9 L612.0 469.3 L629.2 486.0 L638.0 498.1 L645.7 503.0 L674.0 513.2 L700.0 517.6 L710.0 517.2 L730.0 510.9 L740.0 514.0" fill="none" stroke="#00e800" stroke-width="1"/>
<path d="M740.0 555.1 L720.0 559.8 L709.8 570.0" fill="none" stroke="#00e800" stroke-width="1"/>
<path d="M476.3 570.0 L452.8 551.0 L436.9 527.0 L431.5 510.0 L436.5 488.0 L442.0 481.0 L475.0 460.1 L517.0 442.0 L526.0 441.1 L550.0 444.2 L576.0 454.1 L590.0 463.1 L623.3 493.0 L637.0 508.4 L678.0 522.0 L692.0 523.3 L697.8 527.0 L702.8 533.0 L702.3 538.0 L695.0 543.5 L679.1 547.0 L680.1 560.0 L675.7 570.0" fill="none" stroke="#40e800" stroke-width="1"/>
<path d="M494.7 570.0 L480.0 562.0 L460.0 544.8 L446.0 523.4 L441.6 510.0 L447.1 499.0 L450.6 487.0 L456.5 480.0 L481.0 465.2 L517.0 451.2 L528.0 450.2 L547.0 452.9 L560.0 456.7 L573.4 463.0 L602.4 484.0 L609.0 494.7 L617.0 499.8 L629.6 513.0 L647.7 521.0 L654.4 529.0 L657.5 552.0 L656.0 556.4 L651.0 559.6 L611.0 561.2 L582.0 558.8 L538.3 570.0" fill="none" stroke="#80e800" stroke-width="1"/>
<path d="M520.0 563.1 L500.0 562.2 L489.0 558.4 L481.9 554.0 L464.3 535.0 L453.7 512.0 L454.5 508.0 L460.0 499.0 L463.6 487.0 L468.0 481.3 L491.0 468.7 L519.0 459.0 L527.0 458.5 L548.0 462.1 L560.0 466.0 L572.0 472.4 L592.3 488.0 L600.7 508.0 L618.7 518.0 L628.5 531.0 L628.7 536.0 L626.6 540.0 L616.0 546.7 L578.0 545.9 L554.0 554.4 L520.0 563.1" fill="none" stroke="#c0e800" stroke-width="1"/>
<path d="M518.0 553.1 L503.0 552.9 L490.0 549.7 L481.8 542.0 L471.7 528.0 L465.9 517.0 L464.6 511.0 L478.0 486.0 L496.0 474.4 L522.0 468.3 L535.0 469.2 L553.0 472.9 L565.0 477.7 L576.0 484.6 L582.6 494.0 L591.0 517.4 L599.7 527.0 L599.4 531.0 L597.0 532.3 L586.0 532.6 L555.0 543.4 L518.0 553.1" fill="none" stroke="#e0e800" stroke-width="1"/>
<path d="M525.0 540.1 L512.0 540.4 L498.0 536.5 L491.0 531.4 L479.9 518.0 L477.9 510.0 L486.0 500.0 L492.5 488.0 L499.0 482.4 L521.0 479.0 L542.4 481.0 L562.0 488.4 L568.0 499.2 L572.5 512.0 L573.4 519.0 L571.4 525.0 L567.0 528.1 L525.0 540.1" fill="none" stroke="#ffb400" stroke-width="1"/>
<path d="M530.5 493.5 L534.5 523.5 L513.5 525.5 L507.5 523 L500.5 517 L506.5 505.5 L508 503.5 Z" fill="none" stroke="#ff8c00" stroke-width="1"/>
</g>
<g fill="none" stroke="#8c8c8c" stroke-width="1">
<rect x="519.50" y="327.50" width="48.50" height="106.50" fill="none" stroke="#8c8c8c" stroke-width="1"/>
<rect x="659.50" y="417.50" width="47.00" height="48.00" fill="none" stroke="#8c8c8c" stroke-width="1"/>
<line x1="676.5" y1="404" x2="676.5" y2="442" stroke="#8c8c8c" stroke-width="1"/>
<line x1="706.7" y1="444.5" x2="732" y2="444.5" stroke="#8c8c8c" stroke-width="1"/>
<line x1="712.9" y1="403.5" x2="732" y2="403.5" stroke="#8c8c8c" stroke-width="1"/>
<line x1="702.5" y1="330" x2="702.5" y2="350" stroke="#8c8c8c" stroke-width="1"/>
<line x1="719.5" y1="330" x2="719.5" y2="350" stroke="#8c8c8c" stroke-width="1"/>
<rect x="403.50" y="548.50" width="47.00" height="20.00" fill="none" stroke="#8c8c8c" stroke-width="1"/>
</g>
<rect x="540.50" y="330.50" width="6.00" height="13.50" fill="#8a8a8a" stroke="#7a2a8a" stroke-width="1"/>
<path d="M541.5 342.5 L545.5 337.975 M541.5 336.525 L545.5 332" stroke="#222" stroke-width="0.8" fill="none" shape-rendering="geometricPrecision"/>
<rect x="540.50" y="402.50" width="6.00" height="15.50" fill="#8a8a8a" stroke="#7a2a8a" stroke-width="1"/>
<path d="M541.5 416.5 L545.5 411.075 M541.5 409.425 L545.5 404" stroke="#222" stroke-width="0.8" fill="none" shape-rendering="geometricPrecision"/>
<rect x="420.00" y="427.10" width="14.00" height="5.00" fill="#8a8a8a" stroke="#7a2a8a" stroke-width="1"/>
<path d="M421.0 430.6 L433.0 429.90000000000003 M421.0 429.3 L433.0 428.6" stroke="#222" stroke-width="0.8" fill="none" shape-rendering="geometricPrecision"/>
<rect x="690.00" y="440.40" width="10.50" height="3.80" fill="#ff00ff"/>
<rect x="676.00" y="438.80" width="14.00" height="5.30" fill="#8a8a8a" stroke="#7a2a8a" stroke-width="1"/>
<path d="M677.0 442.6 L689.0 441.765 M677.0 441.135 L689.0 440.3" stroke="#222" stroke-width="0.8" fill="none" shape-rendering="geometricPrecision"/>
<rect x="342.00" y="423.00" width="102.00" height="5.00" fill="#8b0000"/>
<rect x="343.00" y="424.00" width="100.00" height="3.00" fill="#ff00ff"/>
<rect x="343.00" y="425.00" width="100.00" height="1.00" fill="#8a8a8a"/>
<rect x="342.00" y="423.00" width="5.00" height="138.00" fill="#8b0000"/>
<rect x="343.00" y="424.00" width="3.00" height="136.00" fill="#ff00ff"/>
<rect x="344.00" y="424.00" width="1.00" height="136.00" fill="#8a8a8a"/>
<rect x="439.00" y="325.00" width="5.00" height="103.00" fill="#8b0000"/>
<rect x="440.00" y="326.00" width="3.00" height="101.00" fill="#ff00ff"/>
<rect x="441.00" y="326.00" width="1.00" height="101.00" fill="#8a8a8a"/>
<rect x="439.00" y="325.00" width="294.00" height="5.00" fill="#8b0000"/>
<rect x="440.00" y="326.00" width="292.00" height="3.00" fill="#ff00ff"/>
<rect x="440.00" y="327.00" width="292.00" height="1.00" fill="#8a8a8a"/>
<rect x="343.00" y="424.00" width="100.00" height="3.00" fill="#ff00ff"/>
<rect x="343.00" y="425.50" width="100.00" height="1.00" fill="#8a8a8a"/>
<rect x="440.00" y="326.00" width="3.00" height="101.00" fill="#ff00ff"/>
<rect x="441.00" y="327.00" width="1.00" height="99.00" fill="#8a8a8a"/>
<rect x="343.00" y="424.00" width="3.00" height="136.00" fill="#ff00ff"/>
<rect x="344.00" y="425.00" width="1.00" height="135.00" fill="#8a8a8a"/>
<rect x="440.00" y="326.00" width="292.00" height="3.00" fill="#ff00ff"/>
<rect x="441.00" y="327.00" width="291.00" height="1.00" fill="#8a8a8a"/>
<path d="M441 333 L442.5 335" fill="none" stroke="#222" stroke-width="1"/>
<path d="M441 341 L442.5 343" fill="none" stroke="#222" stroke-width="1"/>
<path d="M441 349 L442.5 351" fill="none" stroke="#222" stroke-width="1"/>
<path d="M441 357 L442.5 359" fill="none" stroke="#222" stroke-width="1"/>
<path d="M441 365 L442.5 367" fill="none" stroke="#222" stroke-width="1"/>
<path d="M441 373 L442.5 375" fill="none" stroke="#222" stroke-width="1"/>
<path d="M441 381 L442.5 383" fill="none" stroke="#222" stroke-width="1"/>
<path d="M441 389 L442.5 391" fill="none" stroke="#222" stroke-width="1"/>
<path d="M441 397 L442.5 399" fill="none" stroke="#222" stroke-width="1"/>
<path d="M441 405 L442.5 407" fill="none" stroke="#222" stroke-width="1"/>
<path d="M441 413 L442.5 415" fill="none" stroke="#222" stroke-width="1"/>
<path d="M441 421 L442.5 423" fill="none" stroke="#222" stroke-width="1"/>
<rect x="650.00" y="325.00" width="5.00" height="117.00" fill="#ff00ff"/>
<path d="M650.5 325 V442 M654.5 325 V442" fill="none" stroke="#8b0000" stroke-width="1"/>
<rect x="650.00" y="303.00" width="5.00" height="22.00" fill="#f9eded"/>
<path d="M650.5 303 V325 M654.5 303 V325" fill="none" stroke="#8b0000" stroke-width="1"/>
<g shape-rendering="geometricPrecision">
<path d="M650.8 310 L654.2 306" fill="none" stroke="#222" stroke-width="0.8"/>
<path d="M650.8 317 L654.2 313" fill="none" stroke="#222" stroke-width="0.8"/>
<path d="M650.8 324 L654.2 320" fill="none" stroke="#222" stroke-width="0.8"/>
<path d="M650.8 331 L654.2 327" fill="none" stroke="#222" stroke-width="0.8"/>
<path d="M650.8 338 L654.2 334" fill="none" stroke="#222" stroke-width="0.8"/>
<path d="M650.8 345 L654.2 341" fill="none" stroke="#222" stroke-width="0.8"/>
<path d="M650.8 352 L654.2 348" fill="none" stroke="#222" stroke-width="0.8"/>
<path d="M650.8 359 L654.2 355" fill="none" stroke="#222" stroke-width="0.8"/>
<path d="M650.8 366 L654.2 362" fill="none" stroke="#222" stroke-width="0.8"/>
<path d="M650.8 373 L654.2 369" fill="none" stroke="#222" stroke-width="0.8"/>
<path d="M650.8 380 L654.2 376" fill="none" stroke="#222" stroke-width="0.8"/>
<path d="M650.8 387 L654.2 383" fill="none" stroke="#222" stroke-width="0.8"/>
<path d="M650.8 394 L654.2 390" fill="none" stroke="#222" stroke-width="0.8"/>
<path d="M650.8 401 L654.2 397" fill="none" stroke="#222" stroke-width="0.8"/>
<path d="M650.8 408 L654.2 404" fill="none" stroke="#222" stroke-width="0.8"/>
<path d="M650.8 415 L654.2 411" fill="none" stroke="#222" stroke-width="0.8"/>
<path d="M650.8 422 L654.2 418" fill="none" stroke="#222" stroke-width="0.8"/>
<path d="M650.8 429 L654.2 425" fill="none" stroke="#222" stroke-width="0.8"/>
<path d="M650.8 436 L654.2 432" fill="none" stroke="#222" stroke-width="0.8"/>
<path d="M650.8 443 L654.2 439" fill="none" stroke="#222" stroke-width="0.8"/>
</g>
<rect x="675.00" y="325.00" width="3.00" height="86.40" fill="#ff00ff"/>
<path d="M675.5 325 V411.4 M677.5 325 V411.4" fill="none" stroke="#8b0000" stroke-width="1"/>
<rect x="675.00" y="303.00" width="3.00" height="22.00" fill="#f9eded"/>
<path d="M675.5 303 V325 M677.5 303 V325" fill="none" stroke="#8b0000" stroke-width="1"/>
<rect x="676.00" y="307.00" width="1.00" height="1.50" fill="#222"/>
<rect x="676.00" y="315.00" width="1.00" height="1.50" fill="#222"/>
<rect x="676.00" y="323.00" width="1.00" height="1.50" fill="#222"/>
<rect x="676.00" y="331.00" width="1.00" height="1.50" fill="#222"/>
<rect x="676.00" y="339.00" width="1.00" height="1.50" fill="#222"/>
<rect x="676.00" y="347.00" width="1.00" height="1.50" fill="#222"/>
<rect x="676.00" y="355.00" width="1.00" height="1.50" fill="#222"/>
<rect x="676.00" y="363.00" width="1.00" height="1.50" fill="#222"/>
<rect x="676.00" y="371.00" width="1.00" height="1.50" fill="#222"/>
<rect x="676.00" y="379.00" width="1.00" height="1.50" fill="#222"/>
<rect x="676.00" y="387.00" width="1.00" height="1.50" fill="#222"/>
<rect x="676.00" y="395.00" width="1.00" height="1.50" fill="#222"/>
<rect x="676.00" y="403.00" width="1.00" height="1.50" fill="#222"/>
<rect x="699.50" y="349.30" width="3.50" height="93.70" fill="#ff00ff"/>
<path d="M700.0 349.3 V443 M702.5 349.3 V443" fill="none" stroke="#8b0000" stroke-width="1"/>
<rect x="699.50" y="349.30" width="32.50" height="4.30" fill="#ff00ff"/>
<path d="M699.5 349.8 H732 M699.5 353.1 H732" fill="none" stroke="#8b0000" stroke-width="1"/>
<rect x="705.00" y="351.00" width="1.50" height="1.00" fill="#222"/>
<rect x="713.00" y="351.00" width="1.50" height="1.00" fill="#222"/>
<rect x="721.00" y="351.00" width="1.50" height="1.00" fill="#222"/>
<rect x="729.00" y="351.00" width="1.50" height="1.00" fill="#222"/>
<rect x="651.00" y="401.10" width="26.10" height="3.20" fill="#ff00ff"/>
<path d="M651 401.6 H677.1 M651 403.8 H677.1" fill="none" stroke="#8b0000" stroke-width="1"/>
<rect x="655.00" y="402.00" width="1.00" height="1.20" fill="#222"/>
<rect x="661.00" y="402.00" width="1.00" height="1.20" fill="#222"/>
<rect x="667.00" y="402.00" width="1.00" height="1.20" fill="#222"/>
<rect x="673.00" y="402.00" width="1.00" height="1.20" fill="#222"/>
<rect x="703.00" y="401.10" width="9.90" height="3.20" fill="#ff00ff"/>
<path d="M703 401.6 H712.9 M703 403.8 H712.9" fill="none" stroke="#8b0000" stroke-width="1"/>
<rect x="731.00" y="401.00" width="1.00" height="4.00" fill="#8b0000"/>
<rect x="429.80" y="331.60" width="9.70" height="18.60" fill="none" stroke="#ff00ff" stroke-width="1"/>
<rect x="408.80" y="361.60" width="30.70" height="18.20" fill="none" stroke="#ff00ff" stroke-width="1"/>
<rect x="642.60" y="303.60" width="18.80" height="21.30" fill="none" stroke="#ff00ff" stroke-width="1"/>
<rect x="667.60" y="303.60" width="17.60" height="21.30" fill="none" stroke="#ff00ff" stroke-width="1"/>
<rect x="430.00" y="339.30" width="10.00" height="4.30" fill="#ffffff"/>
<path d="M430 339.8 H440 M430 343.1 H440" fill="none" stroke="#8b0000" stroke-width="1"/>
<rect x="408.50" y="368.90" width="31.00" height="3.70" fill="#ffffff"/>
<path d="M408.5 369.4 H440 M408.5 372.1 H440" fill="none" stroke="#8b0000" stroke-width="1"/>
<g shape-rendering="geometricPrecision">
<path d="M411 372 L413 369.5" fill="none" stroke="#222" stroke-width="0.8"/>
<path d="M417 372 L419 369.5" fill="none" stroke="#222" stroke-width="0.8"/>
<path d="M423 372 L425 369.5" fill="none" stroke="#222" stroke-width="0.8"/>
<path d="M429 372 L431 369.5" fill="none" stroke="#222" stroke-width="0.8"/>
<path d="M435 372 L437 369.5" fill="none" stroke="#222" stroke-width="0.8"/>
<path d="M433 342.5 L436 340" fill="none" stroke="#222" stroke-width="0.8"/>
<path d="M666.3 367.3 L659 372 L657.9 384.3 L656.4 405.7 L659.3 412.9 L676.4 405.7 L685 404.3 L697.9 402.9" fill="none" stroke="#4d8f6f" stroke-width="2.8" stroke-linejoin="round"/>
<path d="M666.3 367.3 L674.8 366.1 L678.4 362.5 L679.6 367.3 L684.4 378.1 L685.6 386.6 L692.8 392.6 L698.9 398.6 L699.3 404.3 L695 411.4 L695 418.6 L703.6 425.7 L713.6 418.6 L715.7 408.6 L732 407.1" fill="none" stroke="#4d8f6f" stroke-width="2.8" stroke-linejoin="round"/>
</g>
<g shape-rendering="geometricPrecision">
<rect x="180.50" y="154.50" width="102.50" height="278.50" fill="#eeeef3" stroke="#7c7c82" stroke-width="1"/>
<text x="192.3" y="174.4" font-size="13" fill="#262626" font-weight="normal" font-family='"Liberation Sans", sans-serif' textLength="87.1" lengthAdjust="spacing">δ SLB, Kcs, mm</text>
<defs><linearGradient id="lg" x1="0" y1="0" x2="0" y2="1"><stop offset="0" stop-color="#0010ff"/><stop offset="0.2" stop-color="#00b0ff"/><stop offset="0.27" stop-color="#00ffff"/><stop offset="0.36" stop-color="#00ff90"/><stop offset="0.48" stop-color="#00f000"/><stop offset="0.62" stop-color="#90f000"/><stop offset="0.75" stop-color="#e8ff00"/><stop offset="0.765" stop-color="#ffc800"/><stop offset="1" stop-color="#ff1000"/></linearGradient></defs>
<rect x="234.00" y="180.00" width="39.00" height="130.60" fill="url(#lg)"/>
<text x="192.3" y="191.3" font-size="11" fill="#262626" font-weight="normal" font-family='"Liberation Mono", monospace' textLength="23.4" lengthAdjust="spacingAndGlyphs" stroke="#262626" stroke-width="0.35">-0.4</text>
<text x="192.3" y="204.3" font-size="11" fill="#262626" font-weight="normal" font-family='"Liberation Mono", monospace' textLength="17.5" lengthAdjust="spacingAndGlyphs" stroke="#262626" stroke-width="0.35">1.9</text>
<text x="192.3" y="217.3" font-size="11" fill="#262626" font-weight="normal" font-family='"Liberation Mono", monospace' textLength="17.5" lengthAdjust="spacingAndGlyphs" stroke="#262626" stroke-width="0.35">4.3</text>
<text x="192.3" y="230.3" font-size="11" fill="#262626" font-weight="normal" font-family='"Liberation Mono", monospace' textLength="17.5" lengthAdjust="spacingAndGlyphs" stroke="#262626" stroke-width="0.35">6.6</text>
<text x="192.3" y="243.3" font-size="11" fill="#262626" font-weight="normal" font-family='"Liberation Mono", monospace' textLength="17.5" lengthAdjust="spacingAndGlyphs" stroke="#262626" stroke-width="0.35">8.9</text>
<text x="192.3" y="256.3" font-size="11" fill="#262626" font-weight="normal" font-family='"Liberation Mono", monospace' textLength="23.4" lengthAdjust="spacingAndGlyphs" stroke="#262626" stroke-width="0.35">11.3</text>
<text x="192.3" y="269.3" font-size="11" fill="#262626" font-weight="normal" font-family='"Liberation Mono", monospace' textLength="23.4" lengthAdjust="spacingAndGlyphs" stroke="#262626" stroke-width="0.35">13.6</text>
<text x="192.3" y="282.3" font-size="11" fill="#262626" font-weight="normal" font-family='"Liberation Mono", monospace' textLength="23.4" lengthAdjust="spacingAndGlyphs" stroke="#262626" stroke-width="0.35">15.9</text>
<text x="192.3" y="295.3" font-size="11" fill="#262626" font-weight="normal" font-family='"Liberation Mono", monospace' textLength="23.4" lengthAdjust="spacingAndGlyphs" stroke="#262626" stroke-width="0.35">18.3</text>
<text x="192.3" y="308.3" font-size="11" fill="#262626" font-weight="normal" font-family='"Liberation Mono", monospace' textLength="23.4" lengthAdjust="spacingAndGlyphs" stroke="#262626" stroke-width="0.35">20.6</text>
<circle cx="198" cy="329.4" r="5.5" fill="#ffffff" stroke="#3a3a3a" stroke-width="1"/>
<text x="210.6" y="333.9" font-size="12.5" fill="#262626" font-weight="normal" font-family='"Liberation Sans", sans-serif' textLength="29.0" lengthAdjust="spacing">Lines</text>
<circle cx="198" cy="351.4" r="5.5" fill="#ffffff" stroke="#3a3a3a" stroke-width="1"/>
<text x="210.6" y="355.9" font-size="12.5" fill="#262626" font-weight="normal" font-family='"Liberation Sans", sans-serif' textLength="45.0" lengthAdjust="spacing">Colours</text>
<circle cx="198" cy="329.4" r="2.3" fill="#1e1e1e"/>
<rect x="186.80" y="368.50" width="22.00" height="22.00" fill="#ececf0" stroke="#c6c6cc" stroke-width="1"/>
<rect x="215.50" y="368.50" width="22.00" height="22.00" fill="#ececf0" stroke="#c6c6cc" stroke-width="1"/>
<rect x="244.80" y="368.50" width="22.00" height="22.00" fill="#ececf0" stroke="#c6c6cc" stroke-width="1"/>
<rect x="186.80" y="397.50" width="22.00" height="22.00" fill="#ececf0" stroke="#c6c6cc" stroke-width="1"/>
<rect x="215.50" y="397.50" width="22.00" height="22.00" fill="#ececf0" stroke="#c6c6cc" stroke-width="1"/>
<rect x="244.80" y="397.50" width="22.00" height="22.00" fill="#ececf0" stroke="#c6c6cc" stroke-width="1"/>
<text x="194.5" y="381.5" font-size="9.5" fill="#2a2a2a" font-weight="normal" font-family='"Liberation Sans", sans-serif'>d</text>
<path d="M189.5 386 H205 M192 384 L189.5 386 L192 388 M202.5 384 L205 386 L202.5 388" fill="none" stroke="#2a2a2a" stroke-width="1"/>
<path d="M222.5 386.5 Q225 387.5 225.8 383 L227 375 Q227.8 371.5 230 372.5" fill="none" stroke="#2a2a2a" stroke-width="1.5"/>
<path d="M251 386.5 Q253.5 387.5 254.3 383 L255.5 375 Q256.3 371.5 258.5 372.5 M248 380 H263.5 M261 378 L263.5 380 L261 382" fill="none" stroke="#2a2a2a" stroke-width="1.2"/>
<path d="M188.5 402 Q190 404 191.5 405.5 Q197.5 413 203.5 406" fill="none" stroke="#9a9a9a" stroke-width="1.3"/>
<path d="M218.5 402 V410 M218.5 410 L222 406 M222 406 L230 402.5 M224 406 V413" fill="none" stroke="#9a9a9a" stroke-width="1.2"/>
<path d="M251 415.5 Q253.5 416.5 254.3 412 L255.5 404 Q256.3 400.5 258.5 401.5" fill="none" stroke="#9a9a9a" stroke-width="1.4"/>
<circle cx="258.5" cy="411.5" r="3.8" fill="#b4b4b4"/>
<path d="M256.5 409.5 L260.5 413.5 M260.5 409.5 L256.5 413.5" fill="none" stroke="#e8e8e8" stroke-width="0.8"/>
<rect x="421.50" y="155.50" width="535.00" height="81.00" fill="#eeeef3" stroke="#7c7c82" stroke-width="1"/>
<text x="429.4" y="175.3" font-size="16" fill="#262626" font-weight="normal" font-family='"Liberation Sans", sans-serif' textLength="519.9" lengthAdjust="spacing" xml:space="preserve">Deflection, mm - Load Case (SLB) 1: Dead Load   (31/03/2016 2:06:51 PM)</text>
<text x="446.6" y="192.3" font-size="11.67" fill="#262626" font-weight="bold" font-family='"Liberation Mono", monospace' xml:space="preserve">-include moment field</text>
<text x="656.6" y="192.3" font-size="11.67" fill="#262626" font-weight="bold" font-family='"Liberation Mono", monospace' xml:space="preserve">: No</text>
<text x="446.6" y="206.3" font-size="11.67" fill="#262626" font-weight="bold" font-family='"Liberation Mono", monospace' xml:space="preserve">-include reaction above</text>
<text x="656.6" y="206.3" font-size="11.67" fill="#262626" font-weight="bold" font-family='"Liberation Mono", monospace' xml:space="preserve">: No</text>
<text x="446.6" y="220.3" font-size="11.67" fill="#262626" font-weight="bold" font-family='"Liberation Mono", monospace' xml:space="preserve">-include column moments</text>
<text x="656.6" y="220.3" font-size="11.67" fill="#262626" font-weight="bold" font-family='"Liberation Mono", monospace' xml:space="preserve">: No</text>
<text x="446.6" y="234.3" font-size="11.67" fill="#262626" font-weight="bold" font-family='"Liberation Mono", monospace' xml:space="preserve">-distributed wall reactions</text>
<text x="656.6" y="234.3" font-size="11.67" fill="#262626" font-weight="bold" font-family='"Liberation Mono", monospace' xml:space="preserve">: No</text>
<rect x="1068.50" y="156.50" width="100.00" height="41.00" fill="#eeeef3" stroke="#7c7c82" stroke-width="1"/>
<text x="1103.6" y="178.9" font-size="16" fill="#262626" font-weight="normal" font-family='"Liberation Sans", sans-serif'>Exit SLB</text>
</g>
<rect x="732.00" y="272.00" width="418.00" height="288.00" fill="#6f6f6f"/>
<rect x="737.00" y="277.00" width="409.00" height="278.00" fill="#f0f0f0"/>
<rect x="737.00" y="277.00" width="409.00" height="26.00" fill="#ffffff"/>
<g shape-rendering="geometricPrecision">
<text x="742.8" y="292.0" font-size="12" fill="#1e1e1e" font-weight="normal" font-family='"Liberation Sans", sans-serif' textLength="259.2" lengthAdjust="spacing">Batch Export and Analysis - Floor Design SLB/PTD</text>
</g>
<rect x="749.00" y="318.50" width="397.00" height="57.00" fill="#dfe2e8"/>
<defs><linearGradient id="yg" x1="0" y1="0" x2="0" y2="1"><stop offset="0" stop-color="#ffd257"/><stop offset="1" stop-color="#ffe87a"/></linearGradient></defs>
<rect x="779.50" y="318.50" width="30.00" height="57.00" fill="url(#yg)" stroke="#d09a30" stroke-width="1"/>
<line x1="749" y1="318.5" x2="1146" y2="318.5" stroke="#6a6a6a" stroke-width="1"/>
<line x1="749.5" y1="318.5" x2="749.5" y2="552" stroke="#8a8a8a" stroke-width="1"/>
<line x1="899.5" y1="318.5" x2="899.5" y2="375.5" stroke="#b8bcc4" stroke-width="1"/>
<line x1="939.5" y1="340.5" x2="939.5" y2="375.5" stroke="#b8bcc4" stroke-width="1"/>
<line x1="979.5" y1="340.5" x2="979.5" y2="375.5" stroke="#b8bcc4" stroke-width="1"/>
<line x1="1139.5" y1="340.5" x2="1139.5" y2="375.5" stroke="#b8bcc4" stroke-width="1"/>
<line x1="899.5" y1="340.5" x2="1146" y2="340.5" stroke="#b8bcc4" stroke-width="1"/>
<line x1="749" y1="375.5" x2="1146" y2="375.5" stroke="#a0a4ac" stroke-width="1"/>
<rect x="750.00" y="376.00" width="29.50" height="21.50" fill="#fdd36b"/>
<rect x="780.00" y="376.00" width="29.50" height="21.50" fill="#ffffff"/>
<rect x="810.00" y="376.00" width="89.50" height="21.50" fill="#ffffff"/>
<rect x="900.00" y="376.00" width="246.00" height="21.50" fill="#e8bcbc"/>
<line x1="779.5" y1="376" x2="779.5" y2="398" stroke="#b8bcc4" stroke-width="1"/>
<line x1="809.5" y1="376" x2="809.5" y2="398" stroke="#e6e6e6" stroke-width="1"/>
<line x1="899.5" y1="376" x2="899.5" y2="398" stroke="#f4e6e6" stroke-width="1"/>
<line x1="939.5" y1="376" x2="939.5" y2="398" stroke="#f4e6e6" stroke-width="1"/>
<line x1="979.5" y1="376" x2="979.5" y2="398" stroke="#f4e6e6" stroke-width="1"/>
<line x1="1139.5" y1="376" x2="1139.5" y2="398" stroke="#f4e6e6" stroke-width="1"/>
<line x1="750" y1="397.5" x2="779.5" y2="397.5" stroke="#b8bcc4" stroke-width="1"/>
<line x1="780" y1="397.5" x2="899.5" y2="397.5" stroke="#ececec" stroke-width="1"/>
<line x1="900" y1="397.5" x2="1146" y2="397.5" stroke="#f4e2e2" stroke-width="1"/>
<rect x="913.50" y="381.00" width="12.00" height="12.00" fill="#ffffff" stroke="#333333" stroke-width="1"/>
<path d="M915.5 387.0 L918 390.0 L923.5 383.5" fill="none" stroke="#1a1a1a" stroke-width="1.3"/>
<rect x="953.50" y="381.00" width="12.00" height="12.00" fill="#ffffff" stroke="#333333" stroke-width="1"/>
<path d="M955.5 387.0 L958 390.0 L963.5 383.5" fill="none" stroke="#1a1a1a" stroke-width="1.3"/>
<rect x="981.50" y="377.50" width="46.00" height="18.00" fill="#e0e0e0"/>
<rect x="982.50" y="378.50" width="44.00" height="16.00" fill="#00c800"/>
<g shape-rendering="geometricPrecision">
<text x="813.9" y="391.0" font-size="12" fill="#1e1e1e" font-weight="normal" font-family='"Liberation Sans", sans-serif'>Roof</text>
<text x="1035.4" y="391.0" font-size="12" fill="#1e1e1e" font-weight="normal" font-family='"Liberation Sans", sans-serif' textLength="98.8" lengthAdjust="spacing">Export OK, Run OK</text>
</g>
<rect x="750.00" y="398.00" width="29.50" height="21.50" fill="#dfe2e8"/>
<rect x="780.00" y="398.00" width="29.50" height="21.50" fill="#ffffff"/>
<rect x="810.00" y="398.00" width="89.50" height="21.50" fill="#ffffff"/>
<rect x="900.00" y="398.00" width="246.00" height="21.50" fill="#e8bcbc"/>
<line x1="779.5" y1="398" x2="779.5" y2="420" stroke="#b8bcc4" stroke-width="1"/>
<line x1="809.5" y1="398" x2="809.5" y2="420" stroke="#e6e6e6" stroke-width="1"/>
<line x1="899.5" y1="398" x2="899.5" y2="420" stroke="#f4e6e6" stroke-width="1"/>
<line x1="939.5" y1="398" x2="939.5" y2="420" stroke="#f4e6e6" stroke-width="1"/>
<line x1="979.5" y1="398" x2="979.5" y2="420" stroke="#f4e6e6" stroke-width="1"/>
<line x1="1139.5" y1="398" x2="1139.5" y2="420" stroke="#f4e6e6" stroke-width="1"/>
<line x1="750" y1="419.5" x2="779.5" y2="419.5" stroke="#b8bcc4" stroke-width="1"/>
<line x1="780" y1="419.5" x2="899.5" y2="419.5" stroke="#ececec" stroke-width="1"/>
<line x1="900" y1="419.5" x2="1146" y2="419.5" stroke="#f4e2e2" stroke-width="1"/>
<rect x="913.50" y="403.00" width="12.00" height="12.00" fill="#ffffff" stroke="#333333" stroke-width="1"/>
<path d="M915.5 409.0 L918 412.0 L923.5 405.5" fill="none" stroke="#1a1a1a" stroke-width="1.3"/>
<rect x="953.50" y="403.00" width="12.00" height="12.00" fill="#ffffff" stroke="#333333" stroke-width="1"/>
<path d="M955.5 409.0 L958 412.0 L963.5 405.5" fill="none" stroke="#1a1a1a" stroke-width="1.3"/>
<rect x="981.50" y="399.50" width="46.00" height="18.00" fill="#e0e0e0"/>
<rect x="982.50" y="400.50" width="44.00" height="16.00" fill="#00c800"/>
<g shape-rendering="geometricPrecision">
<text x="764.0" y="413.0" font-size="12" fill="#1e1e1e" font-weight="normal" font-family='"Liberation Sans", sans-serif' text-anchor="middle">7</text>
<text x="813.9" y="413.0" font-size="12" fill="#1e1e1e" font-weight="normal" font-family='"Liberation Sans", sans-serif'>Level 5</text>
<text x="1035.4" y="413.0" font-size="12" fill="#1e1e1e" font-weight="normal" font-family='"Liberation Sans", sans-serif' textLength="98.8" lengthAdjust="spacing">Export OK, Run OK</text>
</g>
<rect x="750.00" y="420.00" width="29.50" height="21.50" fill="#dfe2e8"/>
<rect x="780.00" y="420.00" width="29.50" height="21.50" fill="#ffffff"/>
<rect x="810.00" y="420.00" width="89.50" height="21.50" fill="#ffffff"/>
<rect x="900.00" y="420.00" width="246.00" height="21.50" fill="#e8bcbc"/>
<line x1="779.5" y1="420" x2="779.5" y2="442" stroke="#b8bcc4" stroke-width="1"/>
<line x1="809.5" y1="420" x2="809.5" y2="442" stroke="#e6e6e6" stroke-width="1"/>
<line x1="899.5" y1="420" x2="899.5" y2="442" stroke="#f4e6e6" stroke-width="1"/>
<line x1="939.5" y1="420" x2="939.5" y2="442" stroke="#f4e6e6" stroke-width="1"/>
<line x1="979.5" y1="420" x2="979.5" y2="442" stroke="#f4e6e6" stroke-width="1"/>
<line x1="1139.5" y1="420" x2="1139.5" y2="442" stroke="#f4e6e6" stroke-width="1"/>
<line x1="750" y1="441.5" x2="779.5" y2="441.5" stroke="#b8bcc4" stroke-width="1"/>
<line x1="780" y1="441.5" x2="899.5" y2="441.5" stroke="#ececec" stroke-width="1"/>
<line x1="900" y1="441.5" x2="1146" y2="441.5" stroke="#f4e2e2" stroke-width="1"/>
<rect x="913.50" y="425.00" width="12.00" height="12.00" fill="#ffffff" stroke="#333333" stroke-width="1"/>
<path d="M915.5 431.0 L918 434.0 L923.5 427.5" fill="none" stroke="#1a1a1a" stroke-width="1.3"/>
<rect x="953.50" y="425.00" width="12.00" height="12.00" fill="#ffffff" stroke="#333333" stroke-width="1"/>
<path d="M955.5 431.0 L958 434.0 L963.5 427.5" fill="none" stroke="#1a1a1a" stroke-width="1.3"/>
<rect x="981.50" y="421.50" width="46.00" height="18.00" fill="#e0e0e0"/>
<rect x="982.50" y="422.50" width="44.00" height="16.00" fill="#00c800"/>
<g shape-rendering="geometricPrecision">
<text x="764.0" y="435.0" font-size="12" fill="#1e1e1e" font-weight="normal" font-family='"Liberation Sans", sans-serif' text-anchor="middle">6</text>
<text x="813.9" y="435.0" font-size="12" fill="#1e1e1e" font-weight="normal" font-family='"Liberation Sans", sans-serif'>Level 4</text>
<text x="1035.4" y="435.0" font-size="12" fill="#1e1e1e" font-weight="normal" font-family='"Liberation Sans", sans-serif' textLength="98.8" lengthAdjust="spacing">Export OK, Run OK</text>
</g>
<rect x="750.00" y="442.00" width="29.50" height="21.50" fill="#dfe2e8"/>
<rect x="780.00" y="442.00" width="29.50" height="21.50" fill="#ffffff"/>
<rect x="810.00" y="442.00" width="89.50" height="21.50" fill="#ffffff"/>
<rect x="900.00" y="442.00" width="246.00" height="21.50" fill="#e8bcbc"/>
<line x1="779.5" y1="442" x2="779.5" y2="464" stroke="#b8bcc4" stroke-width="1"/>
<line x1="809.5" y1="442" x2="809.5" y2="464" stroke="#e6e6e6" stroke-width="1"/>
<line x1="899.5" y1="442" x2="899.5" y2="464" stroke="#f4e6e6" stroke-width="1"/>
<line x1="939.5" y1="442" x2="939.5" y2="464" stroke="#f4e6e6" stroke-width="1"/>
<line x1="979.5" y1="442" x2="979.5" y2="464" stroke="#f4e6e6" stroke-width="1"/>
<line x1="1139.5" y1="442" x2="1139.5" y2="464" stroke="#f4e6e6" stroke-width="1"/>
<line x1="750" y1="463.5" x2="779.5" y2="463.5" stroke="#b8bcc4" stroke-width="1"/>
<line x1="780" y1="463.5" x2="899.5" y2="463.5" stroke="#ececec" stroke-width="1"/>
<line x1="900" y1="463.5" x2="1146" y2="463.5" stroke="#f4e2e2" stroke-width="1"/>
<rect x="913.50" y="447.00" width="12.00" height="12.00" fill="#ffffff" stroke="#333333" stroke-width="1"/>
<path d="M915.5 453.0 L918 456.0 L923.5 449.5" fill="none" stroke="#1a1a1a" stroke-width="1.3"/>
<rect x="953.50" y="447.00" width="12.00" height="12.00" fill="#ffffff" stroke="#333333" stroke-width="1"/>
<path d="M955.5 453.0 L958 456.0 L963.5 449.5" fill="none" stroke="#1a1a1a" stroke-width="1.3"/>
<rect x="981.50" y="443.50" width="46.00" height="18.00" fill="#e0e0e0"/>
<rect x="982.50" y="444.50" width="44.00" height="16.00" fill="#00c800"/>
<g shape-rendering="geometricPrecision">
<text x="764.0" y="457.0" font-size="12" fill="#1e1e1e" font-weight="normal" font-family='"Liberation Sans", sans-serif' text-anchor="middle">5</text>
<text x="813.9" y="457.0" font-size="12" fill="#1e1e1e" font-weight="normal" font-family='"Liberation Sans", sans-serif'>Level 3</text>
<text x="1035.4" y="457.0" font-size="12" fill="#1e1e1e" font-weight="normal" font-family='"Liberation Sans", sans-serif' textLength="98.8" lengthAdjust="spacing">Export OK, Run OK</text>
</g>
<rect x="750.00" y="464.00" width="29.50" height="21.50" fill="#dfe2e8"/>
<rect x="780.00" y="464.00" width="29.50" height="21.50" fill="#ffffff"/>
<rect x="810.00" y="464.00" width="89.50" height="21.50" fill="#ffffff"/>
<rect x="900.00" y="464.00" width="246.00" height="21.50" fill="#e8bcbc"/>
<line x1="779.5" y1="464" x2="779.5" y2="486" stroke="#b8bcc4" stroke-width="1"/>
<line x1="809.5" y1="464" x2="809.5" y2="486" stroke="#e6e6e6" stroke-width="1"/>
<line x1="899.5" y1="464" x2="899.5" y2="486" stroke="#f4e6e6" stroke-width="1"/>
<line x1="939.5" y1="464" x2="939.5" y2="486" stroke="#f4e6e6" stroke-width="1"/>
<line x1="979.5" y1="464" x2="979.5" y2="486" stroke="#f4e6e6" stroke-width="1"/>
<line x1="1139.5" y1="464" x2="1139.5" y2="486" stroke="#f4e6e6" stroke-width="1"/>
<line x1="750" y1="485.5" x2="779.5" y2="485.5" stroke="#b8bcc4" stroke-width="1"/>
<line x1="780" y1="485.5" x2="899.5" y2="485.5" stroke="#ececec" stroke-width="1"/>
<line x1="900" y1="485.5" x2="1146" y2="485.5" stroke="#f4e2e2" stroke-width="1"/>
<rect x="913.50" y="469.00" width="12.00" height="12.00" fill="#ffffff" stroke="#333333" stroke-width="1"/>
<path d="M915.5 475.0 L918 478.0 L923.5 471.5" fill="none" stroke="#1a1a1a" stroke-width="1.3"/>
<rect x="953.50" y="469.00" width="12.00" height="12.00" fill="#ffffff" stroke="#333333" stroke-width="1"/>
<path d="M955.5 475.0 L958 478.0 L963.5 471.5" fill="none" stroke="#1a1a1a" stroke-width="1.3"/>
<rect x="981.50" y="465.50" width="46.00" height="18.00" fill="#e0e0e0"/>
<rect x="982.50" y="466.50" width="44.00" height="16.00" fill="#00c800"/>
<g shape-rendering="geometricPrecision">
<text x="764.0" y="479.0" font-size="12" fill="#1e1e1e" font-weight="normal" font-family='"Liberation Sans", sans-serif' text-anchor="middle">4</text>
<text x="813.9" y="479.0" font-size="12" fill="#1e1e1e" font-weight="normal" font-family='"Liberation Sans", sans-serif'>Level 2</text>
<text x="1035.4" y="479.0" font-size="12" fill="#1e1e1e" font-weight="normal" font-family='"Liberation Sans", sans-serif' textLength="98.8" lengthAdjust="spacing">Export OK, Run OK</text>
</g>
<rect x="750.00" y="486.00" width="29.50" height="21.50" fill="#dfe2e8"/>
<rect x="780.00" y="486.00" width="29.50" height="21.50" fill="#ffffff"/>
<rect x="810.00" y="486.00" width="89.50" height="21.50" fill="#ffffff"/>
<rect x="900.00" y="486.00" width="246.00" height="21.50" fill="#e8bcbc"/>
<line x1="779.5" y1="486" x2="779.5" y2="508" stroke="#b8bcc4" stroke-width="1"/>
<line x1="809.5" y1="486" x2="809.5" y2="508" stroke="#e6e6e6" stroke-width="1"/>
<line x1="899.5" y1="486" x2="899.5" y2="508" stroke="#f4e6e6" stroke-width="1"/>
<line x1="939.5" y1="486" x2="939.5" y2="508" stroke="#f4e6e6" stroke-width="1"/>
<line x1="979.5" y1="486" x2="979.5" y2="508" stroke="#f4e6e6" stroke-width="1"/>
<line x1="1139.5" y1="486" x2="1139.5" y2="508" stroke="#f4e6e6" stroke-width="1"/>
<line x1="750" y1="507.5" x2="779.5" y2="507.5" stroke="#b8bcc4" stroke-width="1"/>
<line x1="780" y1="507.5" x2="899.5" y2="507.5" stroke="#ececec" stroke-width="1"/>
<line x1="900" y1="507.5" x2="1146" y2="507.5" stroke="#f4e2e2" stroke-width="1"/>
<rect x="913.50" y="491.00" width="12.00" height="12.00" fill="#ffffff" stroke="#333333" stroke-width="1"/>
<path d="M915.5 497.0 L918 500.0 L923.5 493.5" fill="none" stroke="#1a1a1a" stroke-width="1.3"/>
<rect x="953.50" y="491.00" width="12.00" height="12.00" fill="#ffffff" stroke="#333333" stroke-width="1"/>
<path d="M955.5 497.0 L958 500.0 L963.5 493.5" fill="none" stroke="#1a1a1a" stroke-width="1.3"/>
<rect x="981.50" y="487.50" width="46.00" height="18.00" fill="#e0e0e0"/>
<rect x="982.50" y="488.50" width="44.00" height="16.00" fill="#00c800"/>
<g shape-rendering="geometricPrecision">
<text x="764.0" y="501.0" font-size="12" fill="#1e1e1e" font-weight="normal" font-family='"Liberation Sans", sans-serif' text-anchor="middle">3</text>
<text x="813.9" y="501.0" font-size="12" fill="#1e1e1e" font-weight="normal" font-family='"Liberation Sans", sans-serif'>Level 1</text>
<text x="1035.4" y="501.0" font-size="12" fill="#1e1e1e" font-weight="normal" font-family='"Liberation Sans", sans-serif' textLength="98.8" lengthAdjust="spacing">Export OK, Run OK</text>
</g>
<rect x="750.00" y="508.00" width="29.50" height="21.50" fill="#dfe2e8"/>
<rect x="780.00" y="508.00" width="29.50" height="21.50" fill="#ffffff"/>
<rect x="810.00" y="508.00" width="89.50" height="21.50" fill="#ffffff"/>
<rect x="900.00" y="508.00" width="246.00" height="21.50" fill="#e8bcbc"/>
<line x1="779.5" y1="508" x2="779.5" y2="530" stroke="#b8bcc4" stroke-width="1"/>
<line x1="809.5" y1="508" x2="809.5" y2="530" stroke="#e6e6e6" stroke-width="1"/>
<line x1="899.5" y1="508" x2="899.5" y2="530" stroke="#f4e6e6" stroke-width="1"/>
<line x1="939.5" y1="508" x2="939.5" y2="530" stroke="#f4e6e6" stroke-width="1"/>
<line x1="979.5" y1="508" x2="979.5" y2="530" stroke="#f4e6e6" stroke-width="1"/>
<line x1="1139.5" y1="508" x2="1139.5" y2="530" stroke="#f4e6e6" stroke-width="1"/>
<line x1="750" y1="529.5" x2="779.5" y2="529.5" stroke="#b8bcc4" stroke-width="1"/>
<line x1="780" y1="529.5" x2="899.5" y2="529.5" stroke="#ececec" stroke-width="1"/>
<line x1="900" y1="529.5" x2="1146" y2="529.5" stroke="#f4e2e2" stroke-width="1"/>
<rect x="913.50" y="513.00" width="12.00" height="12.00" fill="#ffffff" stroke="#333333" stroke-width="1"/>
<path d="M915.5 519.0 L918 522.0 L923.5 515.5" fill="none" stroke="#1a1a1a" stroke-width="1.3"/>
<rect x="953.50" y="513.00" width="12.00" height="12.00" fill="#ffffff" stroke="#333333" stroke-width="1"/>
<path d="M955.5 519.0 L958 522.0 L963.5 515.5" fill="none" stroke="#1a1a1a" stroke-width="1.3"/>
<rect x="981.50" y="509.50" width="46.00" height="18.00" fill="#e0e0e0"/>
<rect x="982.50" y="510.50" width="44.00" height="16.00" fill="#00c800"/>
<g shape-rendering="geometricPrecision">
<text x="764.0" y="523.0" font-size="12" fill="#1e1e1e" font-weight="normal" font-family='"Liberation Sans", sans-serif' text-anchor="middle">2</text>
<text x="813.9" y="523.0" font-size="12" fill="#1e1e1e" font-weight="normal" font-family='"Liberation Sans", sans-serif'>Ground Level</text>
<text x="1035.4" y="523.0" font-size="12" fill="#1e1e1e" font-weight="normal" font-family='"Liberation Sans", sans-serif' textLength="98.8" lengthAdjust="spacing">Export OK, Run OK</text>
</g>
<rect x="750.00" y="530.00" width="29.50" height="21.50" fill="#dfe2e8"/>
<rect x="780.00" y="530.00" width="29.50" height="21.50" fill="#ffffff"/>
<rect x="810.00" y="530.00" width="89.50" height="21.50" fill="#ffffff"/>
<rect x="900.00" y="530.00" width="246.00" height="21.50" fill="#e8bcbc"/>
<line x1="779.5" y1="530" x2="779.5" y2="552" stroke="#b8bcc4" stroke-width="1"/>
<line x1="809.5" y1="530" x2="809.5" y2="552" stroke="#e6e6e6" stroke-width="1"/>
<line x1="899.5" y1="530" x2="899.5" y2="552" stroke="#f4e6e6" stroke-width="1"/>
<line x1="939.5" y1="530" x2="939.5" y2="552" stroke="#f4e6e6" stroke-width="1"/>
<line x1="979.5" y1="530" x2="979.5" y2="552" stroke="#f4e6e6" stroke-width="1"/>
<line x1="1139.5" y1="530" x2="1139.5" y2="552" stroke="#f4e6e6" stroke-width="1"/>
<line x1="750" y1="551.5" x2="779.5" y2="551.5" stroke="#b8bcc4" stroke-width="1"/>
<line x1="780" y1="551.5" x2="899.5" y2="551.5" stroke="#ececec" stroke-width="1"/>
<line x1="900" y1="551.5" x2="1146" y2="551.5" stroke="#f4e2e2" stroke-width="1"/>
<rect x="913.50" y="535.00" width="12.00" height="12.00" fill="#ffffff" stroke="#333333" stroke-width="1"/>
<path d="M915.5 541.0 L918 544.0 L923.5 537.5" fill="none" stroke="#1a1a1a" stroke-width="1.3"/>
<rect x="953.50" y="535.00" width="12.00" height="12.00" fill="#ffffff" stroke="#333333" stroke-width="1"/>
<path d="M955.5 541.0 L958 544.0 L963.5 537.5" fill="none" stroke="#1a1a1a" stroke-width="1.3"/>
<rect x="981.50" y="531.50" width="46.00" height="18.00" fill="#e0e0e0"/>
<rect x="982.50" y="532.50" width="44.00" height="16.00" fill="#90ee90"/>
<g shape-rendering="geometricPrecision">
<text x="764.0" y="545.0" font-size="12" fill="#1e1e1e" font-weight="normal" font-family='"Liberation Sans", sans-serif' text-anchor="middle">1</text>
<text x="813.9" y="545.0" font-size="12" fill="#1e1e1e" font-weight="normal" font-family='"Liberation Sans", sans-serif'>Basement</text>
<text x="1035.4" y="545.0" font-size="12" fill="#1e1e1e" font-weight="normal" font-family='"Liberation Sans", sans-serif' textLength="100.0" lengthAdjust="spacing">Export OK, No Slab</text>
</g>
<rect x="780.50" y="376.50" width="28.00" height="20.00" fill="none" stroke="#1a1a1a" stroke-width="1" stroke-dasharray="1 1"/>
<line x1="749" y1="552.5" x2="1146" y2="552.5" stroke="#a0a0a0" stroke-width="1"/>
<g shape-rendering="geometricPrecision">
<text x="756.7" y="351.0" font-size="12" fill="#1e1e1e" font-weight="normal" font-family='"Liberation Sans", sans-serif' textLength="15.4" lengthAdjust="spacing">No</text>
<text x="841.3" y="351.0" font-size="12" fill="#1e1e1e" font-weight="normal" font-family='"Liberation Sans", sans-serif' textLength="26.2" lengthAdjust="spacing">Level</text>
<text x="1104.8" y="333.7" font-size="12" fill="#1e1e1e" font-weight="normal" font-family='"Liberation Sans", sans-serif' textLength="18.8" lengthAdjust="spacing">SLB</text>
<text x="903.1" y="355.2" font-size="12" fill="#1e1e1e" font-weight="normal" font-family='"Liberation Sans", sans-serif' textLength="33.7" lengthAdjust="spacing">Export</text>
<text x="949.2" y="355.2" font-size="12" fill="#1e1e1e" font-weight="normal" font-family='"Liberation Sans", sans-serif' textLength="20.4" lengthAdjust="spacing">Run</text>
<text x="1043.3" y="362.0" font-size="12" fill="#1e1e1e" font-weight="normal" font-family='"Liberation Sans", sans-serif' textLength="31.7" lengthAdjust="spacing">Status</text>
</g>
<rect x="913.50" y="361.50" width="12.00" height="12.00" fill="#ffffff" stroke="#333333" stroke-width="1"/>
<path d="M915.5 367.5 L918 370.5 L923.5 364" fill="none" stroke="#1a1a1a" stroke-width="1.3"/>
<rect x="953.50" y="361.50" width="12.00" height="12.00" fill="#ffffff" stroke="#333333" stroke-width="1"/>
<path d="M955.5 367.5 L958 370.5 L963.5 364" fill="none" stroke="#1a1a1a" stroke-width="1.3"/>
</svg></body></html>
